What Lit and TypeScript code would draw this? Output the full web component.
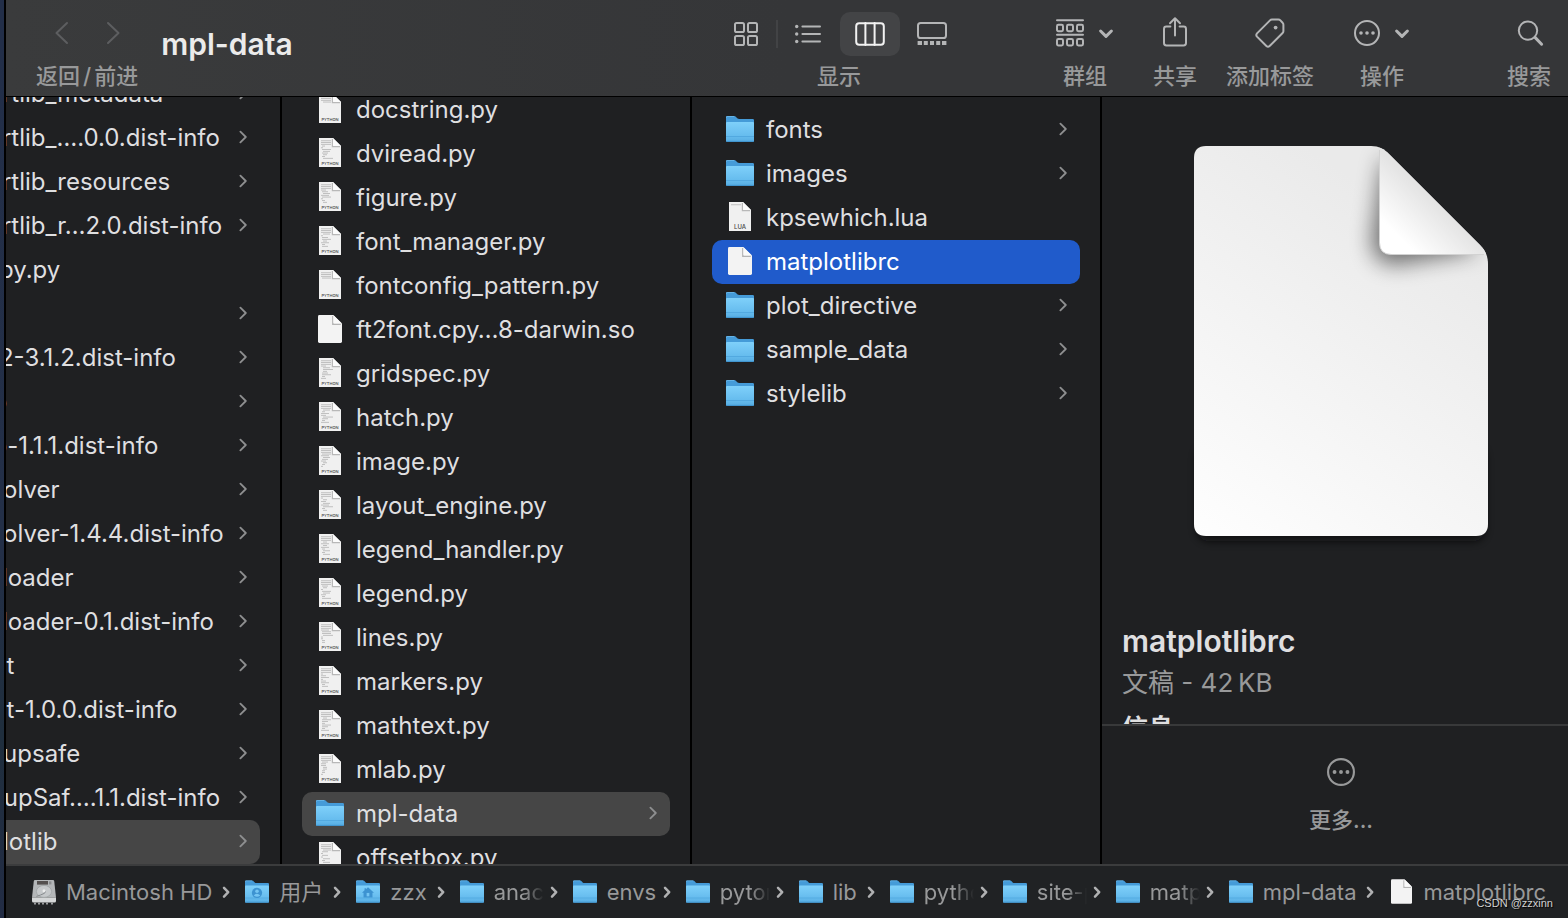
import { LitElement, html, svg, css, nothing } from "lit";
import { customElement } from "lit/decorators.js";
import { classMap } from "lit/directives/class-map.js";

type Kind = "folder" | "users" | "home" | "disk" | "py" | "lua" | "blank";

interface Entry {
  name: string;
  kind: Kind;
  state?: "open" | "selected";
}

const dir = (name: string, state?: Entry["state"]): Entry => ({ name, kind: "folder", state });
const py = (name: string): Entry => ({ name, kind: "py" });

const sitePackages: Entry[] = [
  dir("importlib_metadata"),
  dir("importlib_….0.0.dist-info"),
  dir("importlib_resources"),
  dir("importlib_r…2.0.dist-info"),
  py("isympy.py"),
  dir("jinja2"),
  dir("Jinja2-3.1.2.dist-info"),
  dir("joblib"),
  dir("joblib-1.1.1.dist-info"),
  dir("kiwisolver"),
  dir("kiwisolver-1.4.4.dist-info"),
  dir("lazy_loader"),
  dir("lazy_loader-0.1.dist-info"),
  dir("locket"),
  dir("locket-1.0.0.dist-info"),
  dir("markupsafe"),
  dir("MarkupSaf….1.1.dist-info"),
  dir("matplotlib", "open"),
];

const matplotlib: Entry[] = [
  py("docstring.py"),
  py("dviread.py"),
  py("figure.py"),
  py("font_manager.py"),
  py("fontconfig_pattern.py"),
  { name: "ft2font.cpy…8-darwin.so", kind: "blank" },
  py("gridspec.py"),
  py("hatch.py"),
  py("image.py"),
  py("layout_engine.py"),
  py("legend_handler.py"),
  py("legend.py"),
  py("lines.py"),
  py("markers.py"),
  py("mathtext.py"),
  py("mlab.py"),
  dir("mpl-data", "open"),
  py("offsetbox.py"),
];

const mplData: Entry[] = [
  dir("fonts"),
  dir("images"),
  { name: "kpsewhich.lua", kind: "lua" },
  { name: "matplotlibrc", kind: "blank", state: "selected" },
  dir("plot_directive"),
  dir("sample_data"),
  dir("stylelib"),
];

/* "tight" crumbs are squeezed to a fixed label box; "cut" ones also fade out. */
const path: { name: string; kind: Kind; fit?: "tight" | "tight cut" }[] = [
  { name: "Macintosh HD", kind: "disk" },
  { name: "用户", kind: "users" },
  { name: "zzx", kind: "home" },
  { name: "anaconda3", kind: "folder", fit: "tight cut" },
  { name: "envs", kind: "folder", fit: "tight" },
  { name: "pytorch", kind: "folder", fit: "tight cut" },
  { name: "lib", kind: "folder" },
  { name: "python3.8", kind: "folder", fit: "tight cut" },
  { name: "site-packages", kind: "folder", fit: "tight cut" },
  { name: "matplotlib", kind: "folder", fit: "tight cut" },
  { name: "mpl-data", kind: "folder" },
  { name: "matplotlibrc", kind: "blank" },
];

/* ---------- item icons ---------- */

const folder = (badge: Kind) => html`
  <svg class="i-folder" viewBox="0 0 28 27" aria-hidden="true">
    <defs>
      <linearGradient id="fold" x1="0" y1="0" x2="0" y2="1">
        <stop offset="0" stop-color="#7fd0fa" />
        <stop offset="0.7" stop-color="#66bcee" />
        <stop offset="1" stop-color="#57ade2" />
      </linearGradient>
    </defs>
    <path d="M0 1.2Q0 0 1.2 0H8.2C10.4 0 10.6 3 13.2 3H26.8Q28 3 28 4.2V12H0Z" fill="#459bd8" />
    <path d="M0 2Q0 .5 1.2 .5H8.2" fill="none" stroke="#6db9ea" stroke-width=".8" />
    <path d="M0 7Q0 6 1 6H27Q28 6 28 7V24.8Q28 26 26.8 26H1.2Q0 26 0 24.8Z" fill="url(#fold)" />
    <path d="M0 20.5H28" stroke="#4ea4dc" stroke-width=".8" />
    <path d="M.4 25.4H27.6" stroke="#3f92cd" stroke-width="1" />
    ${badge === "users"
      ? svg`<circle cx="14" cy="14.5" r="6" fill="#3d93d1" /><circle cx="14" cy="12.6" r="2.1" fill="#74c5f3" /><path d="M10.2 17.6Q14 13.6 17.8 17.6Q14 20.6 10.2 17.6Z" fill="#74c5f3" />`
      : nothing}
    ${badge === "home"
      ? svg`<path d="M14 8L21 14.4H19.2V20H8.8V14.4H7L10 11.6V9H11.6V10.2Z" fill="#3d93d1" /><rect x="12.4" y="14.6" width="3.2" height="4" fill="#74c5f3" />`
      : nothing}
  </svg>
`;

const blank = () => html`
  <svg class="i-blank" viewBox="0 0 24 29" aria-hidden="true">
    <path d="M0 1.4Q0 0 1.4 0H15.2L24 8.8V26.6Q24 28 22.6 28H1.4Q0 28 0 26.6Z" fill="#f3f3f3" />
    <path d="M14.8 1V9.2H22.8" fill="none" stroke="#b4b4b4" stroke-width="1.4" />
    <path d="M15.4 0V7.6Q15.4 8.6 16.4 8.6H24Z" fill="#fafafa" />
  </svg>
`;

/* Lines of code on the thumbnail: each file gets its own ragged pattern. */
const codeLines = (seed: number, count: number) =>
  Array.from({ length: count }, (_, i) => {
    const r = (seed * 37 + i * 53 + seed * i * 11) % 17;
    const x = i < 3 ? 2 : 2 + (r % 3);
    const w = i < 3 ? 10 : 2 + (r % 9);
    return svg`<rect x=${x} y=${2.4 + i * 1.75} width=${Math.min(w, i < 4 ? 12 - x : 18 - x)} height=".8" fill="#b4b4b4" />`;
  });

const textDoc = (label: string, seed: number) => html`
  <svg class="i-doc" viewBox="0 0 22 30" aria-hidden="true">
    <path d="M0 0H14L22 8V29H0Z" fill="#f0f0f0" />
    ${codeLines(seed, label === "LUA" ? 1 : seed === 1 || seed === 5 ? 4 : 11)}
    <path d="M13.4 1V8.6H21" fill="none" stroke="#b8b8b8" stroke-width="1.2" />
    <path d="M14 0V7Q14 8 15 8H22Z" fill="#fcfcfc" />
    <text x="11" y="26.5" text-anchor="middle" class=${label === "LUA" ? "tag lua" : "tag"}>${label}</text>
  </svg>
`;

const disk = () => html`
  <svg class="i-disk" viewBox="0 0 24 25" aria-hidden="true">
    <path d="M3 0H21Q22 0 22.2 1L24 17.5H0L1.8 1Q2 0 3 0Z" fill="#b3b6b8" />
    <path d="M0 17.5H24V21Q24 22.6 22.4 22.6H1.6Q0 22.6 0 21Z" fill="#d5d7d8" />
    <rect x="5" y="1" width="11" height="3.6" fill="#54504f" />
    <rect x="17" y="1.4" width="2.4" height="3" fill="#8b8d8f" />
    <ellipse cx="12" cy="11.4" rx="7.6" ry="6" fill="#c6c9cb" stroke="#a0a4a6" stroke-width=".8" />
    <path d="M12 10.2Q14.6 11 12.6 13.2Q8.6 15.2 4.4 16.4" fill="none" stroke="#85898c" stroke-width="1" />
    <circle cx="12" cy="10.8" r="1.5" fill="#eceded" />
    <path d="M3 22.6V24.4M7 22.6V24.4M11 22.6V24.4M15 22.6V24.4M20 22.6V24.4" stroke="#9a9c9e" stroke-width="2" />
  </svg>
`;

const itemIcon = (kind: Kind, seed = 1) => {
  if (kind === "py") return textDoc("PYTHON", seed);
  if (kind === "lua") return textDoc("LUA", seed);
  if (kind === "blank") return blank();
  if (kind === "disk") return disk();
  return folder(kind);
};

const rowChevron = html`
  <svg class="chev" width="8" height="14" viewBox="0 0 8 14" aria-hidden="true">
    <path d="M1.4 1.6L6.8 7L1.4 12.4" />
  </svg>
`;

const pathChevron = html`
  <svg class="chev" width="8" height="14" viewBox="0 0 8 14" aria-hidden="true">
    <path d="M2 2.8L6.2 7.2L2 11.6" />
  </svg>
`;

/* ---------- toolbar icons ---------- */

const downChevron = html`
  <svg class="down" width="14" height="10" viewBox="0 0 14 10" aria-hidden="true">
    <path d="M1.6 3L7 8.4L12.4 3" />
  </svg>
`;

const gridIcon = html`
  <svg width="24" height="24" viewBox="0 0 24 24" aria-hidden="true">
    <rect x="1" y="1" width="9" height="9" rx="1.6" /><rect x="14" y="1" width="9" height="9" rx="1.6" />
    <rect x="1" y="14" width="9" height="9" rx="1.6" /><rect x="14" y="14" width="9" height="9" rx="1.6" />
  </svg>
`;

const listIcon = html`
  <svg width="26" height="20" viewBox="0 0 26 20" aria-hidden="true">
    <path d="M7.4 2.5H25M7.4 10H25M7.4 17.5H25" />
    <g class="solid"><circle cx="1.7" cy="2.5" r="1.7" /><circle cx="1.7" cy="10" r="1.7" /><circle cx="1.7" cy="17.5" r="1.7" /></g>
  </svg>
`;

const columnsIcon = html`
  <svg width="30" height="24" viewBox="0 0 30 24" aria-hidden="true">
    <rect x="1.2" y="1.2" width="27.6" height="21.6" rx="3" /><path d="M10.4 1V23M19.6 1V23" />
  </svg>
`;

const galleryIcon = html`
  <svg width="30" height="24" viewBox="0 0 30 24" aria-hidden="true">
    <rect x="1" y="1" width="28" height="15" rx="2.6" />
    <g class="solid">
      <rect x=".6" y="19" width="4.4" height="4" /><rect x="6.8" y="19" width="4" height="4" />
      <rect x="13" y="19" width="4" height="4" /><rect x="19.2" y="19" width="4" height="4" /><rect x="25" y="19" width="4.4" height="4" />
    </g>
  </svg>
`;

const groupIcon = html`
  <svg width="28" height="28" viewBox="0 0 28 28" aria-hidden="true">
    <path d="M1 1.3H27M1 15.8H27" />
    ${[5.8, 20].map((y) => [1, 11, 21].map((x) => svg`<rect x=${x} y=${y} width="6" height="6.4" rx="1.4" />`))}
  </svg>
`;

const shareIcon = html`
  <svg width="24" height="30" viewBox="0 1 24 30" aria-hidden="true">
    <path d="M7.4 9.6H3.4Q1 9.6 1 12V26Q1 28.4 3.4 28.4H20.6Q23 28.4 23 26V12Q23 9.6 20.6 9.6H16.6" />
    <path d="M12 18.6V1.6M7 6.2L12 1.2L17 6.2" />
  </svg>
`;

const tagIcon = html`
  <svg width="30" height="30" viewBox="0 0 30 30" aria-hidden="true">
    <path d="M16.8 1.6H23.4Q24.6 1.6 25.4 2.4L27.6 4.8Q28.4 5.6 28.4 6.8V13.2Q28.4 14.2 27.6 15L14.6 28Q13 29.4 11.4 28L2 18.6Q.6 17 2 15.4L15 2.4Q15.8 1.6 16.8 1.6Z" />
    <circle class="solid" cx="20.6" cy="9.6" r="1.9" />
  </svg>
`;

const moreIcon = (size: number) => html`
  <svg width=${size} height=${size} viewBox="0 0 26 26" aria-hidden="true">
    <circle cx="13" cy="13" r="12" />
    <g class="solid"><circle cx="7" cy="13" r="1.8" /><circle cx="13" cy="13" r="1.8" /><circle cx="19" cy="13" r="1.8" /></g>
  </svg>
`;

const searchIcon = html`
  <svg width="26" height="26" viewBox="0 0 26 26" aria-hidden="true">
    <circle cx="12" cy="10.6" r="9.2" /><path class="handle" d="M19 17.4L25.6 24.2" />
  </svg>
`;

@customElement("app-root")
export class AppRoot extends LitElement {
  static styles = css`
    :host {
      display: block;
      font-family: Inter, "Noto Sans CJK SC", sans-serif;
      color: #dfdfe0;
    }
    * { box-sizing: border-box; }
    button {
      font: inherit;
      color: inherit;
      background: none;
      border: 0;
      padding: 0;
      margin: 0;
      text-align: left;
    }
    svg { display: block; flex: none; }

    .desktop {
      height: 100vh;
      padding-left: 4px;
      background: linear-gradient(#222e48, #232f47 60%, #1f2e3d 80%, #222c44);
    }
    .window {
      height: 100%;
      display: flex;
      flex-direction: column;
      border-left: 2px solid #000;
      background: #1f2022;
      overflow: hidden;
    }

    /* toolbar */
    .toolbar {
      flex: none;
      height: 97px;
      display: flex;
      gap: 29px;
      padding: 12px 17px 0 30px;
      border-bottom: 1px solid #000;
      background: linear-gradient(90deg, #3a3b3c, #353638 50%, #353638);
      white-space: nowrap;
    }
    .tool {
      display: flex;
      flex-direction: column;
      align-items: center;
      gap: 4px;
      font-size: 22px;
      line-height: 32px;
      font-weight: 500;
      color: #98999a;
    }
    .face {
      height: 44px;
      display: flex;
      align-items: center;
      justify-content: center;
      gap: 15px;
      padding-bottom: 2px;
    }
    .tool svg {
      fill: none;
      stroke: #b4b5b6;
      stroke-width: 2;
      stroke-linecap: round;
      stroke-linejoin: round;
      overflow: visible;
    }
    .tool .solid { fill: #b4b5b6; stroke: none; }
    .tool .down { stroke-width: 3; }
    .tool .handle { stroke-width: 3; }
    .tool.nav .face { gap: 39px; }
    .tool.nav svg { stroke: #5d5e60; }
    .slash { padding: 0 3px; }
    .menu { width: 78px; }
    .views { margin-right: 55px; }
    .views .face { gap: 0; padding: 0; }
    .views button {
      width: 60px;
      height: 44px;
      display: flex;
      align-items: center;
      justify-content: center;
      border-radius: 10px;
      padding-bottom: 1px;
    }
    .views button + button { margin-left: 2px; }
    .views .on { background: #434446; }
    .views .on svg { stroke: #f2f2f2; }
    .sep { width: 2px; height: 28px; background: #424345; }
    .search { margin-left: 57px; }
    .title {
      flex: 1;
      margin: 0 0 0 -6px;
      font-size: 30px;
      line-height: 64px;
      font-weight: 600;
      color: #ebebeb;
    }

    /* columns */
    .columns {
      flex: 1;
      min-height: 0;
      display: flex;
    }
    .column {
      flex: none;
      display: flex;
      justify-content: flex-end;
      border-right: 2px solid #000;
      overflow: hidden;
    }
    .column.cut { width: 276px; }
    .list {
      flex: none;
      width: 408px;
      margin: 0;
      padding: 0 20px;
      list-style: none;
      font-size: 24px;
      line-height: 44px;
      font-weight: 420;
    }
    .scroll-a { margin-top: -25px; }
    .scroll-b { margin-top: -9px; }
    .scroll-c { margin-top: 11px; }
    .row {
      width: 100%;
      height: 44px;
      display: flex;
      align-items: center;
      gap: 12px;
      padding: 0 13px 0 14px;
      border-radius: 10px;
      white-space: nowrap;
    }
    .row.open { background: #464646; }
    .row.selected { background: #205bcb; color: #fff; }
    .row > .chev { margin-bottom: 2px; }
    .slot {
      flex: none;
      width: 28px;
      display: flex;
      justify-content: center;
      padding-bottom: 2px;
    }
    .name { flex: 1; min-width: 0; }
    .chev { fill: none; stroke: #8e8f90; stroke-width: 1.8; stroke-linecap: round; stroke-linejoin: round; }

    .i-folder { width: 28px; height: 27px; }
    .i-blank { width: 24px; height: 29px; }
    .i-doc { width: 22px; height: 30px; }
    .i-disk { width: 24px; height: 25px; }
    .tag { font: 500 4px Inter, sans-serif; fill: #444; }
    .tag.lua { font-size: 6px; }

    /* preview */
    .preview {
      flex: 1;
      min-width: 0;
      display: flex;
      flex-direction: column;
    }
    .info {
      flex: 1;
      min-height: 0;
      overflow: hidden;
      padding: 49px 8px 0 20px;
    }
    .page { margin: 0 auto 85px; overflow: visible; }
    .info h2 {
      margin: 0;
      font-size: 30px;
      line-height: 40px;
      font-weight: 600;
    }
    .meta {
      margin: 0;
      font-size: 26px;
      line-height: 44px;
      font-weight: 420;
      color: #98999a;
    }
    .info h3 {
      margin: 6px 0 0;
      font-size: 26px;
      line-height: 36px;
      font-weight: 700;
    }
    .actions {
      flex: none;
      height: 140px;
      padding: 32px 8px 0 20px;
      border-top: 2px solid #38393a;
      display: flex;
      justify-content: center;
      align-items: flex-start;
    }
    .actions .tool { gap: 18px; }
    .actions svg { stroke: #98999a; }
    .actions .solid { fill: #98999a; }

    /* path bar */
    .pathbar {
      flex: none;
      height: 54px;
      display: flex;
      align-items: center;
      border-top: 2px solid #3b3c3d;
      padding-left: 26px;
      background: #202224;
      color: #98999a;
      font-size: 22px;
      line-height: 32px;
      font-weight: 420;
      white-space: nowrap;
      overflow: hidden;
    }
    .crumb { flex: none; display: flex; align-items: center; gap: 10px; }
    .crumb .slot { width: 24px; padding: 0; }
    .crumb .i-folder { width: 24px; height: 24px; }
    .crumb .i-blank { width: 21px; height: 26px; }
    .label { padding-right: 4px; }
    .label.tight { width: 50px; padding: 0; overflow: hidden; }
    .label.cut { mask-image: linear-gradient(90deg, #000 60%, transparent); }
    .pathbar > .chev { margin: 0 15px 0 6px; stroke: #b0b1b2; stroke-width: 2.5; }

    .watermark {
      position: absolute;
      right: 15px;
      bottom: 7px;
      font: 11px/16px "Liberation Sans", sans-serif;
      color: #d2d2d2;
      text-shadow: 1px 1px 1px #000;
    }
  `;

  private list(items: Entry[], scroll: string, label: string) {
    return html`
      <ul class="list ${scroll}" aria-label=${label}>
        ${items.map(
          (e, i) => html`<li>
            <button class=${classMap({ row: true, open: e.state === "open", selected: e.state === "selected" })}>
              <span class="slot">${itemIcon(e.kind, i + 1)}</span>
              <span class="name">${e.name}</span>
              ${e.kind === "folder" ? rowChevron : nothing}
            </button>
          </li>`
        )}
      </ul>
    `;
  }

  private toolbar() {
    return html`
      <header class="toolbar">
        <div class="tool nav">
          <div class="face">
            <button aria-label="返回"><svg width="13" height="22" viewBox="0 0 13 22"><path d="M12 1L1.5 11L12 21" /></svg></button>
            <button aria-label="前进"><svg width="13" height="22" viewBox="0 0 13 22"><path d="M1 1L11.5 11L1 21" /></svg></button>
          </div>
          <div>返回<span class="slash">/</span>前进</div>
        </div>
        <h1 class="title">mpl-data</h1>
        <div class="tool views">
          <div class="face">
            <button aria-label="图标">${gridIcon}</button>
            <span class="sep"></span>
            <button aria-label="列表">${listIcon}</button>
            <button class="on" aria-label="分栏" aria-pressed="true">${columnsIcon}</button>
            <button aria-label="画廊">${galleryIcon}</button>
          </div>
          <span>显示</span>
        </div>
        <button class="tool menu"><span class="face">${groupIcon}${downChevron}</span><span>群组</span></button>
        <button class="tool"><span class="face">${shareIcon}</span><span>共享</span></button>
        <button class="tool"><span class="face">${tagIcon}</span><span>添加标签</span></button>
        <button class="tool menu"><span class="face">${moreIcon(26)}${downChevron}</span><span>操作</span></button>
        <button class="tool search"><span class="face">${searchIcon}</span><span>搜索</span></button>
      </header>
    `;
  }

  private preview() {
    return html`
      <section class="preview">
        <div class="info">
          <svg class="page" width="294" height="390" viewBox="0 0 294 390" role="img" aria-label="matplotlibrc">
            <defs>
              <linearGradient id="paper" gradientUnits="userSpaceOnUse" x1="200" y1="60" x2="-16" y2="380">
                <stop offset="0" stop-color="#eaeaea" />
                <stop offset="1" stop-color="#fefefe" />
              </linearGradient>
              <linearGradient id="curl" gradientUnits="userSpaceOnUse" x1="238" y1="54" x2="204" y2="90">
                <stop offset="0" stop-color="#e4e4e4" />
                <stop offset="1" stop-color="#ffffff" />
              </linearGradient>
              <filter id="soft" x="-60%" y="-60%" width="220%" height="220%"><feGaussianBlur stdDeviation="11" /></filter>
              <filter id="drop" x="-10%" y="-30%" width="120%" height="160%"><feGaussianBlur stdDeviation="4" /></filter>
              <clipPath id="edge">
                <path d="M12 0H177C185 0 190 3 195 8L286 99C291 104 294 110 294 118V378Q294 390 282 390H12Q0 390 0 378V12Q0 0 12 0Z" />
              </clipPath>
            </defs>
            <rect x="3" y="300" width="288" height="95" rx="12" fill="#0c0d0e" opacity=".8" filter="url(#drop)" />
            <g clip-path="url(#edge)">
              <rect width="294" height="390" fill="url(#paper)" />
              <path d="M190 8L178 96Q180 120 204 118L286 104L230 60Z" fill="#000" opacity=".55" filter="url(#soft)" />
              <path d="M185.5 0V96.5Q185.5 108.5 197.5 108.5H294V0Z" fill="url(#curl)" />
              <path d="M185.5 4V96.5Q185.5 108.5 197.5 108.5H290" fill="none" stroke="#d2d2d2" stroke-width="1" />
            </g>
          </svg>
          <h2>matplotlibrc</h2>
          <p class="meta">文稿 - 42&thinsp;KB</p>
          <h3>信息</h3>
        </div>
        <div class="actions">
          <button class="tool">${moreIcon(28)}<span>更多...</span></button>
        </div>
      </section>
    `;
  }

  render() {
    return html`
      <div class="desktop">
        <div class="window">
          ${this.toolbar()}
          <main class="columns">
            <div class="column cut">${this.list(sitePackages, "scroll-a", "site-packages")}</div>
            <div class="column">${this.list(matplotlib, "scroll-b", "matplotlib")}</div>
            <div class="column">${this.list(mplData, "scroll-c", "mpl-data")}</div>
            ${this.preview()}
          </main>
          <nav class="pathbar">
            ${path.map(
              (p, i) => html`${i ? pathChevron : nothing}<button class="crumb">
                  <span class="slot">${itemIcon(p.kind)}</span><span class="label ${p.fit ?? ""}">${p.name}</span>
                </button>`
            )}
          </nav>
        </div>
        <div class="watermark">CSDN @zzxinn</div>
      </div>
    `;
  }
}
